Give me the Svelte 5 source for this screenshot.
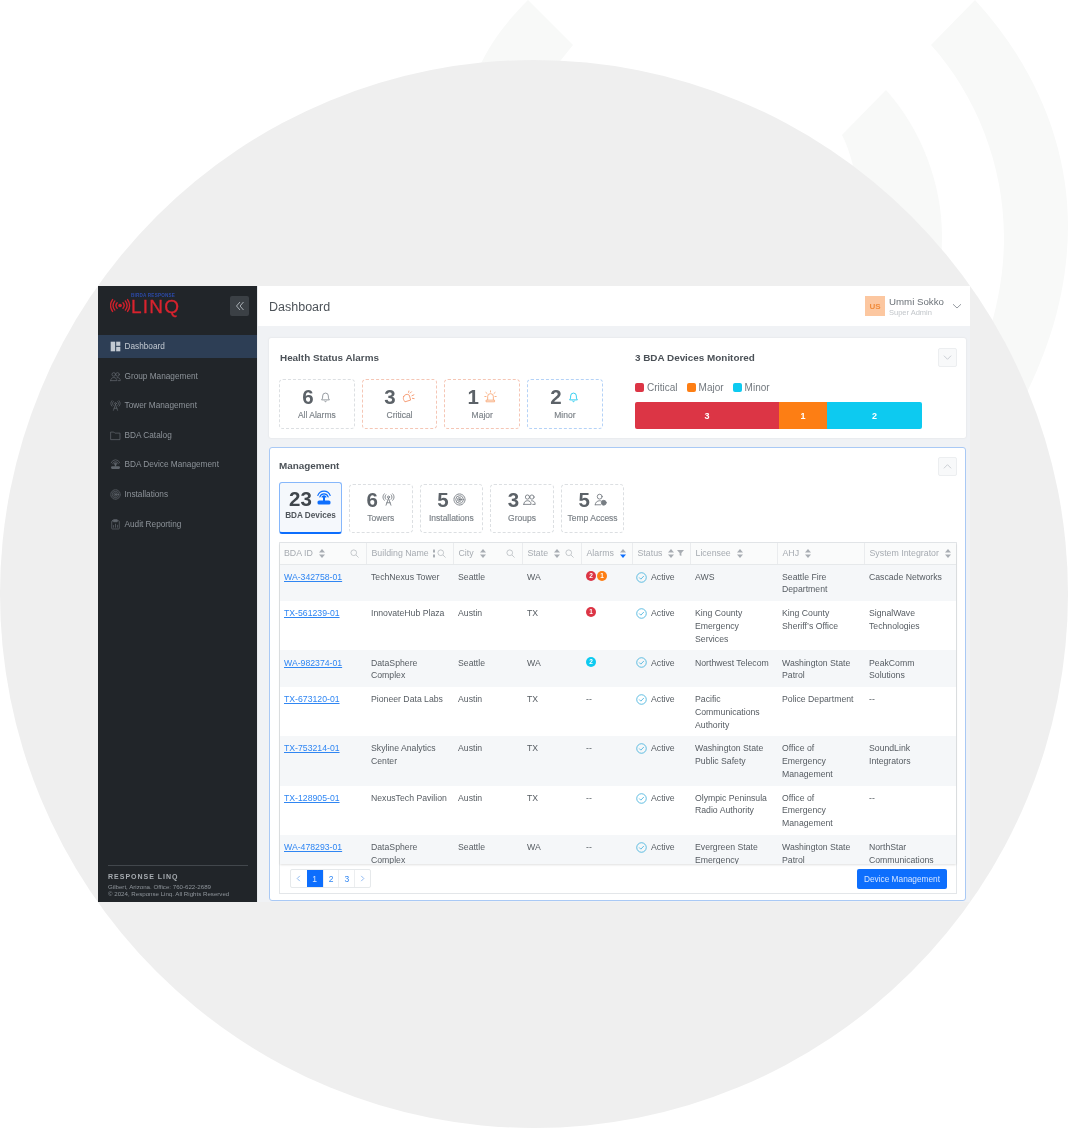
<script>
  const nav = [
    { label: 'Dashboard', icon: 'dash', active: true },
    { label: 'Group Management', icon: 'group' },
    { label: 'Tower Management', icon: 'tower' },
    { label: 'BDA Catalog', icon: 'folder' },
    { label: 'BDA Device Management', icon: 'bda' },
    { label: 'Installations', icon: 'target' },
    { label: 'Audit Reporting', icon: 'report' }
  ];
  const stats = [
    { n: 6, label: 'All Alarms', tone: 'grey', icon: 'bell', color: '#8a9096', s: 13 },
    { n: 3, label: 'Critical', tone: 'red', icon: 'siren', color: '#f59a72', s: 14 },
    { n: 1, label: 'Major', tone: 'red', icon: 'alert', color: '#f8a878', s: 13 },
    { n: 2, label: 'Minor', tone: 'blue', icon: 'bell', color: '#1fc8ee', s: 13 }
  ];
  const tabs = [
    { n: 23, label: 'BDA Devices', icon: 'bda', active: true, color: '#0d6efd' },
    { n: 6, label: 'Towers', icon: 'tower', color: '#777d83' },
    { n: 5, label: 'Installations', icon: 'target', color: '#777d83' },
    { n: 3, label: 'Groups', icon: 'group', color: '#777d83' },
    { n: 5, label: 'Temp Access', icon: 'temp', color: '#777d83' }
  ];
  const cols = [
    { label: 'BDA ID', w: 86, sort: true, search: true },
    { label: 'Building Name', w: 87, search: true, tight: true },
    { label: 'City', w: 69, sort: true, search: true },
    { label: 'State', w: 59, sort: true, search: true },
    { label: 'Alarms', w: 51, sort: true, sortActive: true },
    { label: 'Status', w: 58, sort: true, filter: true },
    { label: 'Licensee', w: 87, sort: true },
    { label: 'AHJ', w: 87, sort: true },
    { label: 'System Integrator', w: 93, sort: true }
  ];
  const rows = [
    ['WA-342758-01', 'TechNexus Tower', 'Seattle', 'WA', [['c', 2], ['m', 1]], 'AWS', 'Seattle Fire Department', 'Cascade Networks'],
    ['TX-561239-01', 'InnovateHub Plaza', 'Austin', 'TX', [['c', 1]], 'King County Emergency Services', 'King County Sheriff’s Office', 'SignalWave Technologies'],
    ['WA-982374-01', 'DataSphere Complex', 'Seattle', 'WA', [['n', 2]], 'Northwest Telecom', 'Washington State Patrol', 'PeakComm Solutions'],
    ['TX-673120-01', 'Pioneer Data Labs', 'Austin', 'TX', [], 'Pacific Communications Authority', 'Police Department', '--'],
    ['TX-753214-01', 'Skyline Analytics Center', 'Austin', 'TX', [], 'Washington State Public Safety', 'Office of Emergency Management', 'SoundLink Integrators'],
    ['TX-128905-01', 'NexusTech Pavilion', 'Austin', 'TX', [], 'Olympic Peninsula Radio Authority', 'Office of Emergency Management', '--'],
    ['WA-478293-01', 'DataSphere Complex', 'Seattle', 'WA', [], 'Evergreen State Emergency Services', 'Washington State Patrol', 'NorthStar Communications']
  ];
</script>

{#snippet icon(name, size, color)}
  <svg class="ico" width={size} height={size} viewBox="0 0 16 16" fill="none" stroke={color} stroke-width="1.1" stroke-linecap="round" stroke-linejoin="round">
    {#if name === 'dash'}
      <rect x="1" y="1" width="6.5" height="14" fill={color} stroke="none" /><rect x="9" y="1" width="6" height="6" fill={color} stroke="none" /><rect x="9" y="8.5" width="6" height="6.5" fill={color} stroke="none" />
    {:else if name === 'group'}
      <circle cx="5.5" cy="5" r="2.6" /><circle cx="11" cy="5" r="2.6" /><path d="M1 14c0-3 2-4.5 4.5-4.5S10 11 10 14H1zM10.5 9.5c2.6 0 4.5 1.500 4.500 4.500h-3" />
    {:else if name === 'tower'}
      <path d="M8 6.500 5 15M8 6.500 11 15M6 12h4" /><circle cx="8" cy="5" r="1.300" /><path d="M4.800 2.200c-1.500 1.600-1.500 4 0 5.600M11.200 2.200c1.500 1.600 1.500 4 0 5.600M2.800 1c-2.200 2.400-2.200 5.600 0 8M13.200 1c2.200 2.400 2.200 5.600 0 8" />
    {:else if name === 'folder'}
      <path d="M1.500 3h4l1.500 1.500h7.500V14h-13z" />
    {:else if name === 'bda'}
      <path d="M3.800 7a4.400 4.400 0 0 1 8.400 0M1.800 5.500a6.600 6.600 0 0 1 12.400 0" /><path d="M6 7a2.200 2.200 0 0 1 4 0z" fill={color} /><rect x="7" y="7" width="2" height="4" fill={color} stroke="none" /><rect x="1.500" y="10.500" width="13" height="4" rx="1.600" fill={color} stroke="none" />
    {:else if name === 'target'}
      <circle cx="8" cy="8" r="6.800" stroke-dasharray="1.400 .8" /><circle cx="8" cy="8" r="4.600" /><circle cx="8" cy="8" r="2.400" /><circle cx="8" cy="8" r=".8" fill={color} />
    {:else if name === 'report'}
      <rect x="2.500" y="2.500" width="11" height="12" rx="1" /><rect x="5.500" y="1" width="5" height="3" fill={color} /><path d="M5 12V9.500M8 12V7.500M11 12V9" />
    {:else if name === 'bell'}
      <path d="M3.500 11.800c1-1.200 1-2.500 1-4.500a3.500 3.500 0 0 1 7 0c0 2 0 3.300 1 4.500z" /><path d="M6.800 13.600a1.300 1.300 0 0 0 2.400 0" />
    {:else if name === 'siren'}
      <path d="M3 7.500a4 4 0 0 1 6.500-1.500l1.500 5.500-6.500 2-1-1.500c-1-1.500-1-3-.5-4.500z" /><path d="M10.500 3.500 12 2M12.500 6.500l2.300-1M13 9.500l2 .3M9 1.200l-.3 1.500" />
    {:else if name === 'alert'}
      <path d="M4.500 12V8a3.500 3.500 0 0 1 7 0v4" /><path d="M3 12.500h10V14.500H3zM8 1v1.500M2.300 3l1.400 1.200M13.700 3l-1.400 1.200M1 8h1.500M13.500 8H15" />
    {:else if name === 'temp'}
      <circle cx="7" cy="4.500" r="3" /><path d="M1.500 14.500c0-3 2.500-5 5.500-5 1 0 1.500.2 2 .4M1.500 14.500H8" /><circle cx="12" cy="12" r="3" fill={color} />
    {/if}
  </svg>
{/snippet}

{#snippet sortIcon(active)}
  <svg class="ico sort" width="6" height="9" viewBox="0 0 6 9"><path d="M3 0 6 3.400H0z" fill="#a8adb3" /><path d="M3 9 0 5.600H6z" fill={active ? '#0d6efd' : '#a8adb3'} /></svg>
{/snippet}

{#snippet searchIcon()}
  <svg class="ico search" width="9" height="9" viewBox="0 0 12 12" fill="none" stroke="#b4b9be" stroke-width="1"><circle cx="5" cy="5" r="3.800" /><path d="m8 8 3.400 3.400" /></svg>
{/snippet}

<div class="page">
  <svg class="backdrop" width="1068" height="1128" viewBox="0 0 1068 1128" aria-hidden="true">
    <path class="wave" d="M528 0 573 45 553 70H478C490 42 508 20 528 0Z" />
    <path class="wave" d="M842 135 886 90C922 130 942 185 942 235 942 270 936 305 925 340L860 200C856 175 850 150 842 135Z" />
    <path class="wave" d="M931 45 975 0C1035 65 1068 145 1068 225 1068 290 1050 350 1018 410L960 400C990 345 1004 290 1004 237 1004 165 976 95 931 45Z" />
    <circle cx="534" cy="594" r="534" fill="#efefef" />
  </svg>

  <div class="window">
    <aside class="sidebar">
      <div class="brand">
        <div class="logo">
          <svg width="22" height="15" viewBox="0 0 24 16" fill="none" stroke="#d2202b" stroke-width="1.500" stroke-linecap="round">
            <circle cx="11" cy="8" r="2" fill="#d2202b" stroke="none" />
            <path d="M7.800 5a4.500 4.500 0 0 0 0 6M14.200 5a4.500 4.500 0 0 1 0 6M5.300 3a8 8 0 0 0 0 10M16.700 3a8 8 0 0 1 0 10M2.800 1.500a11.500 11.500 0 0 0 0 13M19.200 1.500a11.500 11.500 0 0 1 0 13" />
          </svg>
          <div class="logo-text">
            <span class="logo-top">BIRDA RESPONSE</span>
            <span class="logo-linq">LINQ</span>
          </div>
        </div>
        <button class="collapse" aria-label="Collapse">
          <svg width="10" height="10" viewBox="0 0 10 10" fill="none" stroke="#aab0b6" stroke-width="1"><path d="M5 1 1.500 5 5 9M8.500 1 5 5 8.500 9" /></svg>
        </button>
      </div>
      <nav class="nav">
        {#each nav as item}
          <div class="nav-item" class:active={item.active}>
            {@render icon(item.icon, 11, item.active ? '#c3cad2' : '#5f656c')}
            <span>{item.label}</span>
          </div>
        {/each}
      </nav>
      <div class="side-foot">
        <div class="foot-title">RESPONSE LINQ</div>
        <div class="foot-line">Gilbert, Arizona. Office: 760-622-2689</div>
        <div class="foot-line">© 2024, Response Linq. All Rights Reserved</div>
      </div>
    </aside>

    <div class="main">
      <header class="topbar">
        <h1>Dashboard</h1>
        <div class="user">
          <div class="avatar">US</div>
          <div class="who"><div class="name">Ummi Sokko</div><div class="role">Super Admin</div></div>
          <svg width="10" height="10" viewBox="0 0 10 10" fill="none" stroke="#8a9096" stroke-width=".9"><path d="M1 3.200 5 7l4-3.800" /></svg>
        </div>
      </header>

      <div class="content">
        <section class="card health">
          <div class="alarms">
            <h2>Health Status Alarms</h2>
            <div class="stat-row">
              {#each stats as s}
                <div class="stat {s.tone}">
                  <div class="stat-top"><span class="num">{s.n}</span>{@render icon(s.icon, s.s, s.color)}</div>
                  <div class="stat-label">{s.label}</div>
                </div>
              {/each}
            </div>
          </div>
          <div class="monitored">
            <h2>3 BDA Devices Monitored</h2>
            <div class="legend">
              <span class="key"><i class="crit"></i>Critical</span>
              <span class="key"><i class="maj"></i>Major</span>
              <span class="key"><i class="min"></i>Minor</span>
            </div>
            <div class="bar">
              <div class="seg crit" style="flex: 144">3</div>
              <div class="seg maj" style="flex: 48">1</div>
              <div class="seg min" style="flex: 95">2</div>
            </div>
          </div>
          <button class="fold" aria-label="Collapse">
            <svg width="9" height="9" viewBox="0 0 10 10" fill="none" stroke="#c6cacf" stroke-width="1"><path d="M1 3 5 7l4-4" /></svg>
          </button>
        </section>

        <section class="card manage">
          <h2>Management</h2>
          <button class="fold" aria-label="Expand">
            <svg width="9" height="9" viewBox="0 0 10 10" fill="none" stroke="#c6cacf" stroke-width="1"><path d="M1 7 5 3l4 4" /></svg>
          </button>
          <div class="tab-row">
            {#each tabs as t}
              <div class="tab" class:active={t.active}>
                <div class="stat-top"><span class="num">{t.n}</span>{@render icon(t.icon, t.active ? 16 : 13, t.color)}</div>
                <div class="stat-label">{t.label}</div>
              </div>
            {/each}
          </div>

          <div class="table-box">
            <div class="table-scroll">
              <table>
                <colgroup>
                  {#each cols as c}<col style="width: {c.w}px" />{/each}
                </colgroup>
                <thead>
                  <tr>
                    {#each cols as c}
                      <th>
                        <div class="th">
                          <span class="th-label">{c.label}</span>
                          {#if c.sort}{@render sortIcon(c.sortActive)}{/if}
                          {#if c.tight}<span class="th-clip">{@render sortIcon(false)}</span>{/if}
                          {#if c.search}{@render searchIcon()}{/if}
                          {#if c.filter}
                            <svg class="ico filter" width="7" height="8" viewBox="0 0 8 8"><path d="M0 .5h8L5 4v3.500L3 6.500V4z" fill="#a8adb3" /></svg>
                          {/if}
                        </div>
                      </th>
                    {/each}
                  </tr>
                </thead>
                <tbody>
                  {#each rows as r}
                    <tr>
                      <td><a href="#top">{r[0]}</a></td>
                      <td>{r[1]}</td>
                      <td>{r[2]}</td>
                      <td>{r[3]}</td>
                      <td>
                        {#if r[4].length}
                          <div class="badges">
                            {#each r[4] as b}<span class="badge {b[0]}">{b[1]}</span>{/each}
                          </div>
                        {:else}--{/if}
                      </td>
                      <td>
                        <div class="status">
                          <svg class="ico" width="11" height="11" viewBox="0 0 12 12" fill="none" stroke="#3fb0dc" stroke-width=".9"><circle cx="6" cy="6" r="5.200" /><path d="m3.500 6 1.800 1.800 3.300-3.500" /></svg>
                          Active
                        </div>
                      </td>
                      <td>{r[5]}</td>
                      <td>{r[6]}</td>
                      <td>{r[7]}</td>
                    </tr>
                  {/each}
                </tbody>
              </table>
            </div>
            <div class="table-foot">
              <div class="pager">
                <span class="pg">
                  <svg width="7" height="7" viewBox="0 0 8 8" fill="none" stroke="#7fb0f0" stroke-width="1"><path d="M5.500 1 2.500 4l3 3" /></svg>
                </span>
                <span class="pg on">1</span>
                <span class="pg">2</span>
                <span class="pg">3</span>
                <span class="pg">
                  <svg width="7" height="7" viewBox="0 0 8 8" fill="none" stroke="#7fb0f0" stroke-width="1"><path d="m2.500 1 3 3-3 3" /></svg>
                </span>
              </div>
              <button class="primary">Device Management</button>
            </div>
          </div>
        </section>
      </div>
    </div>
  </div>
</div>

<style>
  :global(body) { margin: 0; background: #fff; }
  * { box-sizing: border-box; }
  .page {
    position: relative;
    width: 1068px;
    height: 1128px;
    overflow: hidden;
    padding: 286px 98px 0;
    font-family: "Liberation Sans", Arial, sans-serif;
  }
  .backdrop { position: absolute; inset: 0; display: block; }
  .wave { fill: #f8f9f8; }
  .window {
    position: relative;
    display: flex;
    width: 872px;
    height: 616px;
    background: #f0f2f5;
    filter: blur(0.45px);
  }
  .ico { display: block; flex: none; }

  .sidebar {
    width: 160px;
    flex: none;
    display: flex;
    flex-direction: column;
    background: #212529;
    border-right: 1px solid #e8eaed;
  }
  .brand {
    height: 49px;
    padding: 10px 8px 0 12px;
    display: flex;
    justify-content: space-between;
    align-items: flex-start;
  }
  .logo { display: flex; align-items: center; height: 20px; margin-top: -2px; }
  .logo svg { margin-right: -1px; margin-top: 3px; }
  .logo-text { display: flex; flex-direction: column; line-height: 1; }
  .logo-top { font-size: 4.600px; font-weight: 700; color: #2c4aa8; letter-spacing: .2px; height: 4px; line-height: 4px; white-space: nowrap; }
  .logo-linq { font-size: 19px; color: #d8232e; letter-spacing: 1.200px; line-height: 17px; height: 17px; -webkit-text-stroke: .3px #d8232e; }
  .collapse {
    width: 19px;
    height: 20px;
    padding: 0;
    border: 0;
    border-radius: 2px;
    background: #3b4045;
    display: grid;
    place-items: center;
  }
  .nav { display: flex; flex-direction: column; gap: 6.600px; }
  .nav-item {
    height: 23px;
    display: flex;
    align-items: center;
    gap: 3.500px;
    padding-left: 12px;
    font-size: 8.250px;
    color: #8d9399;
  }
  .nav-item.active { background: #2d3e55; color: #c3cad2; }
  .side-foot {
    margin: auto 9px 0 10px;
    padding: 6px 0 5px;
    border-top: 1px solid #42474c;
    color: #8f959b;
    font-size: 6.150px;
    line-height: 7px;
  }
  .foot-title { font-size: 7px; font-weight: 700; letter-spacing: 1px; line-height: 10px; margin-bottom: 1px; color: #a7acb1; }
  .foot-line { white-space: nowrap; }

  .main { flex: 1; min-width: 0; display: flex; flex-direction: column; }
  .topbar {
    height: 40px;
    flex: none;
    background: #fff;
    display: flex;
    align-items: center;
    justify-content: space-between;
    padding: 0 8px 0 11px;
  }
  h1 { margin: 2px 0 0; font-size: 12.500px; font-weight: 400; color: #4d5359; }
  .user { display: flex; align-items: center; }
  .avatar {
    width: 20px;
    height: 20px;
    margin-right: 4px;
    background: #fcc7a0;
    color: #f08c3c;
    font-size: 8px;
    font-weight: 700;
    display: grid;
    place-items: center;
  }
  .who { width: 63px; height: 20px; padding-top: 1px; }
  .name { font-size: 9.700px; color: #6c7278; line-height: 10px; white-space: nowrap; }
  .role { font-size: 7.500px; color: #c2c6ca; line-height: 9px; margin-top: 1px; white-space: nowrap; }

  .content {
    flex: 1;
    min-height: 0;
    display: flex;
    flex-direction: column;
    gap: 9px;
    padding: 12px 4px 1px 11px;
  }
  .card {
    position: relative;
    background: #fff;
    border-radius: 2px;
    box-shadow: 0 0 2px rgba(0, 0, 0, .1);
  }
  h2 { margin: 0; font-size: 9.900px; font-weight: 700; color: #4b5157; line-height: 12px; }
  .health { height: 100px; display: flex; padding: 14px 0 0 11px; flex: none; }
  .alarms { width: 355px; }
  .stat-row { display: flex; gap: 7px; margin: 15px 0 0 -1px; }
  .stat {
    width: 75.700px;
    height: 50px;
    border: 1px dashed #dcdfe2;
    border-radius: 4px;
    text-align: center;
    padding-top: 6px;
  }
  .stat.red { border-color: #f5c6b5; }
  .stat.blue { border-color: #b4d2f7; }
  .stat-top { display: flex; justify-content: center; align-items: center; gap: 5px; height: 21px; }
  .num { font-size: 20.500px; font-weight: 700; color: #5c6268; line-height: 21px; }
  .stat-label { font-size: 8.500px; font-weight: 400; color: #7b8187; line-height: 10px; margin-top: 3px; -webkit-text-stroke: .15px #7b8187; }
  .monitored { width: 287px; }
  .legend { display: flex; gap: 9px; margin: 17px 0 0; height: 12px; align-items: center; font-size: 10px; color: #73797f; }
  .key { display: flex; align-items: center; gap: 3px; }
  .key i { width: 9px; height: 9px; border-radius: 2px; display: block; }
  .crit { background: #dc3545; }
  .maj { background: #fd7e14; }
  .min { background: #0dcaf0; }
  .bar { display: flex; height: 27px; margin-top: 9px; border-radius: 2px; overflow: hidden; }
  .seg { display: grid; place-items: center; color: #fff; font-size: 9px; font-weight: 700; }
  .fold {
    position: absolute;
    top: 10px;
    right: 9px;
    width: 19px;
    height: 19px;
    padding: 0;
    border: 1px solid #eceef0;
    border-radius: 2px;
    background: #f8f9fa;
    display: grid;
    place-items: center;
  }
  .manage .fold { top: 9px; right: 8px; }

  .manage {
    flex: 1;
    min-height: 0;
    display: flex;
    flex-direction: column;
    padding: 12px 9px 6px 9px;
    border: 1px solid #a9c9f5;
    border-radius: 3px;
    box-shadow: none;
  }
  .tab-row { display: flex; gap: 7px; margin: 10px 0 0; height: 52px; align-items: center; }
  .tab {
    width: 63.600px;
    height: 49px;
    border: 1px dashed #dcdfe2;
    border-radius: 4px;
    text-align: center;
    padding-top: 5px;
  }
  .tab .stat-top { gap: 4px; height: 20px; }
  .tab.active {
    width: 63px;
    height: 52px;
    border: 1px solid #86b7fb;
    border-bottom: 2.500px solid #0d6efd;
    background: #f5f8fc;
    padding-top: 5px;
    border-radius: 3px;
  }
  .tab.active .num { color: #40464c; }
  .tab.active .stat-label { font-weight: 700; font-size: 8.200px; color: #50565c; -webkit-text-stroke: 0; }

  .table-box {
    margin: 8px 0 0;
    flex: 1;
    min-height: 0;
    width: 678px;
    display: flex;
    flex-direction: column;
    border: 1px solid #e3e6e9;
  }
  .table-scroll { height: 321px; flex: none; overflow: hidden; box-shadow: 0 1px 2px rgba(0,0,0,.12); position: relative; }
  table { border-collapse: collapse; table-layout: fixed; width: 677px; font-size: 8.700px; color: #565c62; }
  th {
    height: 21px;
    padding: 0 7px 0 5px;
    background: #fafbfb;
    border-left: 1px solid #eaecee;
    border-bottom: 1px solid #e6e9eb;
    font-weight: 400;
    color: #a6abb1;
    text-align: left;
  }
  th:first-child { border-left: 0; padding-left: 4px; }
  .th { display: flex; align-items: center; white-space: nowrap; font-size: 8.800px; }
  .th-label { flex: none; }
  .sort { margin-left: 6px; }
  .th-clip { width: 2px; height: 9px; margin-left: 4px; overflow: hidden; flex: none; }
  .th-clip :global(.sort) { margin-left: -2px; }
  .search { margin-left: auto; }
  .filter { margin-left: 3px; }
  td { padding: 6.200px 5px 5px; line-height: 12.700px; vertical-align: top; }
  td:first-child { padding-left: 4px; }
  tbody tr:nth-child(odd) td { background: #f5f7f9; }
  a { color: #2f86f3; }
  .badges { display: flex; gap: 1px; }
  .badge {
    width: 10px;
    height: 10px;
    border-radius: 50%;
    color: #fff;
    font-size: 6.500px;
    line-height: 10px;
    text-align: center;
    font-weight: 700;
  }
  .badge.c { background: #dc3545; }
  .badge.m { background: #fd7e14; }
  .badge.n { background: #0dcaf0; }
  .status { display: flex; align-items: center; gap: 4px; margin-left: -1px; }

  .table-foot { flex: 1; background: #fff; display: flex; align-items: flex-start; justify-content: space-between; padding: 5px 9px 0 10px; }
  .pager { display: flex; border: 1px solid #e6e9eb; border-radius: 2px; height: 19px; }
  .pg {
    width: 15.800px;
    display: grid;
    place-items: center;
    font-size: 8.500px;
    color: #2f86f3;
    border-left: 1px solid #eceef0;
  }
  .pg:first-child { border-left: 0; }
  .pg.on { background: #0d6efd; color: #d5e5ff; border-left: 0; }
  .primary {
    width: 90px;
    height: 20px;
    padding: 0;
    border: 0;
    border-radius: 2px;
    background: #0d6efd;
    color: #d5e5ff;
    font: 8.300px "Liberation Sans", Arial, sans-serif;
  }
</style>
